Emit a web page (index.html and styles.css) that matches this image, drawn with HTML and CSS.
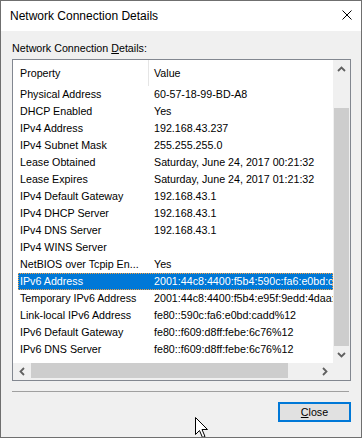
FILE: index.html
```html
<!DOCTYPE html>
<html>
<head>
<meta http-equiv="Content-Type" content="text/html; charset=utf-8">
<title>Network Connection Details</title>
<link rel="stylesheet" href="styles.css">
</head>
<body>
<div class="window">
  <div class="titlebar">
    <span class="title">Network Connection Details</span>
    <svg class="close-x" width="10" height="10" viewBox="0 0 10 10">
      <path d="M0.5 0.5 L9.5 9.5 M9.5 0.5 L0.5 9.5" stroke="#000" stroke-width="1" fill="none"/>
    </svg>
  </div>
  <div class="client">
    <div class="label">Network Connection <u>D</u>etails:</div>
    <div class="listbox">
      <div class="list">
        <div class="row header"><div class="prop">Property</div><div class="val">Value</div></div>
        <div class="row"><div class="prop">Physical Address</div><div class="val">60-57-18-99-BD-A8</div></div>
        <div class="row"><div class="prop">DHCP Enabled</div><div class="val">Yes</div></div>
        <div class="row"><div class="prop">IPv4 Address</div><div class="val">192.168.43.237</div></div>
        <div class="row"><div class="prop">IPv4 Subnet Mask</div><div class="val">255.255.255.0</div></div>
        <div class="row"><div class="prop">Lease Obtained</div><div class="val">Saturday, June 24, 2017 00:21:32</div></div>
        <div class="row"><div class="prop">Lease Expires</div><div class="val">Saturday, June 24, 2017 01:21:32</div></div>
        <div class="row"><div class="prop">IPv4 Default Gateway</div><div class="val">192.168.43.1</div></div>
        <div class="row"><div class="prop">IPv4 DHCP Server</div><div class="val">192.168.43.1</div></div>
        <div class="row"><div class="prop">IPv4 DNS Server</div><div class="val">192.168.43.1</div></div>
        <div class="row"><div class="prop">IPv4 WINS Server</div><div class="val"></div></div>
        <div class="row"><div class="prop">NetBIOS over Tcpip En...</div><div class="val">Yes</div></div>
        <div class="row selected"><div class="prop">IPv6 Address</div><div class="val">2001:44c8:4400:f5b4:590c:fa6:e0bd:cadd</div></div>
        <div class="row"><div class="prop">Temporary IPv6 Address</div><div class="val">2001:44c8:4400:f5b4:e95f:9edd:4daa:1c2f</div></div>
        <div class="row"><div class="prop">Link-local IPv6 Address</div><div class="val">fe80::590c:fa6:e0bd:cadd%12</div></div>
        <div class="row"><div class="prop">IPv6 Default Gateway</div><div class="val">fe80::f609:d8ff:febe:6c76%12</div></div>
        <div class="row"><div class="prop">IPv6 DNS Server</div><div class="val">fe80::f609:d8ff:febe:6c76%12</div></div>
      </div>
      <div class="vscroll">
        <div class="arrow">
          <svg width="9" height="6" viewBox="0 0 9 6"><polyline points="1,5 4.5,1.5 8,5" stroke="#606060" stroke-width="1.8" fill="none"/></svg>
        </div>
        <div class="track"><div class="thumb"></div></div>
        <div class="arrow">
          <svg width="9" height="6" viewBox="0 0 9 6"><polyline points="1,1 4.5,4.5 8,1" stroke="#606060" stroke-width="1.8" fill="none"/></svg>
        </div>
      </div>
      <div class="hscroll">
        <div class="arrow">
          <svg width="6" height="9" viewBox="0 0 6 9"><polyline points="5,1 1.5,4.5 5,8" stroke="#606060" stroke-width="1.8" fill="none"/></svg>
        </div>
        <div class="track"><div class="thumb"></div></div>
        <div class="arrow">
          <svg width="6" height="9" viewBox="0 0 6 9"><polyline points="1,1 4.5,4.5 1,8" stroke="#606060" stroke-width="1.8" fill="none"/></svg>
        </div>
      </div>
      <div class="corner"></div>
    </div>
    <div class="sep"></div>
    <div class="buttons">
      <button class="btn"><u>C</u>lose</button>
    </div>
  </div>
  <!-- mouse pointer lying over the dialog -->
  <svg class="cursor" width="14" height="22" viewBox="0 0 14 22">
    <path d="M0.5 0.5 V17.5 L4.5 13.5 L7.5 20.5 L10 19.5 L7 12.5 L12.5 12.5 Z" fill="#fff" stroke="#000" stroke-width="1"/>
  </svg>
</div>
</body>
</html>
```

FILE: styles.css
```css
body {
  margin: 0;
  font-family: "Liberation Sans", Arial, sans-serif;
  font-size: 10.7px;
  color: #000;
}
.window {
  position: relative;
  width: 362px;
  height: 438px;
  box-sizing: border-box;
  border: 1px solid #6f6f6f;
  background: #f0f0f0;
  display: flex;
  flex-direction: column;
  overflow: hidden;
}
.titlebar {
  height: 30px;
  background: #fff;
  display: flex;
  align-items: center;
  padding-left: 9px;
  font-size: 12px;
}
.close-x {
  margin-left: auto;
  margin-right: 9px;
  align-self: flex-start;
  margin-top: 9px;
}
.client {
  flex: 1;
  padding: 9px 10px 0 11px;
}
.label {
  line-height: 16px;
  margin-bottom: 3px;
}

/* list view with both scrollbars */
.listbox {
  width: 339px;
  height: 322px;
  box-sizing: border-box;
  border: 1px solid #828790;
  background: #fff;
  display: grid;
  grid-template-columns: 320px 17px;
  grid-template-rows: 303px 17px;
}
.list { overflow: hidden; }
.row {
  display: grid;
  grid-template-columns: 131px 1fr;
  margin-left: 5px;
  height: 17px;
  line-height: 17px;
  white-space: nowrap;
}
.row .prop { padding-left: 2px; overflow: hidden; }
.row .val { padding-left: 5px; overflow: hidden; }
.header { height: 26px; line-height: 26px; }
.header .prop { border-right: 1px solid #e5e5e5; }
.selected {
  background: #0078d7;
  color: #fff;
  outline: 1px dotted #f7a040;
  outline-offset: -1px;
}

.vscroll, .hscroll { background: #f0f0f0; display: flex; }
.vscroll { flex-direction: column; }
.arrow {
  flex: 0 0 17px;
  display: flex;
  align-items: center;
  justify-content: center;
}
.track { flex: 1; }
.vscroll .thumb {
  margin: 31px 1px 0 1px;
  height: 238px;
  background: #cdcdcd;
}
.hscroll .thumb {
  margin-left: 1px;
  width: 257px;
  height: 15px;
  background: #cdcdcd;
}
.corner { background: #f0f0f0; }

.sep {
  margin-top: 10px;
  width: 337px;
  height: 1px;
  background: #a0a0a0;
}
.buttons {
  display: flex;
  justify-content: flex-end;
  margin-top: 10px;
}
.btn {
  width: 73px;
  height: 20px;
  box-sizing: border-box;
  border: 2px solid #0078d7;
  background: #e1e1e1;
  font-family: inherit;
  font-size: inherit;
  color: #000;
  padding: 0;
}
.cursor {
  position: absolute;
  left: 194px;
  top: 416px;
}
```
